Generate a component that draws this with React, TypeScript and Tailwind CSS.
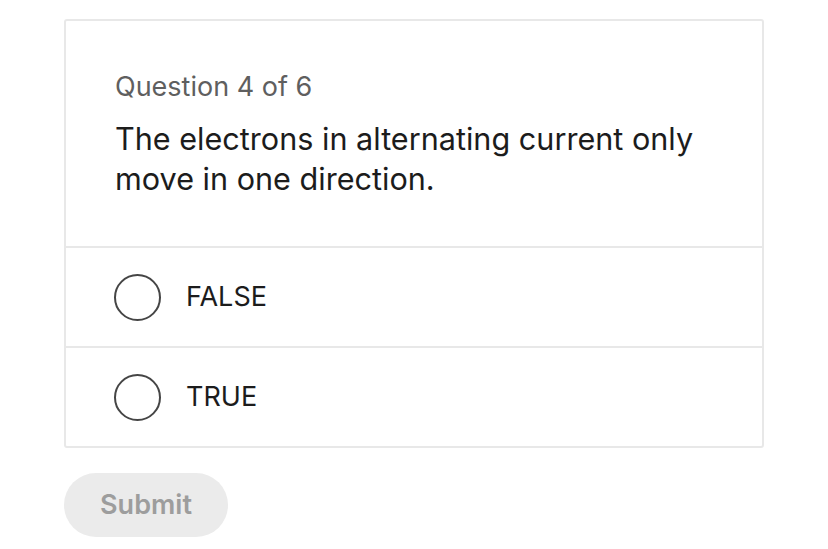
const options = ["FALSE", "TRUE"];

export default function App() {
  return (
    <div className="min-h-screen bg-white px-[64px] pt-[19px] font-['Inter',sans-serif]">
      <div className="w-[700px] rounded-[3px] border-2 border-[#e8e8e8]">
        {/* Question header */}
        <div className="px-[49px] pt-[48px] pb-[47px]">
          <p className="text-[27px] leading-[36px] text-[#5f5f5f]">Question 4 of 6</p>
          <p className="mt-[14px] text-[30.6px] leading-[40px] text-[#1c1c1c]">
            The electrons in alternating current only move in one direction.
          </p>
        </div>

        {/* Answer options */}
        {options.map((opt) => (
          <div
            key={opt}
            className="flex h-[100px] items-center gap-[25px] border-t-2 border-[#e8e8e8] px-[48px]"
          >
            <span className="h-[47px] w-[47px] shrink-0 rounded-full border-2 border-[#454545]" />
            <span className="text-[27px] text-[#1c1c1c]">{opt}</span>
          </div>
        ))}
      </div>

      <button className="mt-[25px] h-[64px] w-[164px] rounded-full bg-[#ebebeb] text-[27px] font-semibold text-[#9d9d9d]">
        Submit
      </button>
    </div>
  );
}
